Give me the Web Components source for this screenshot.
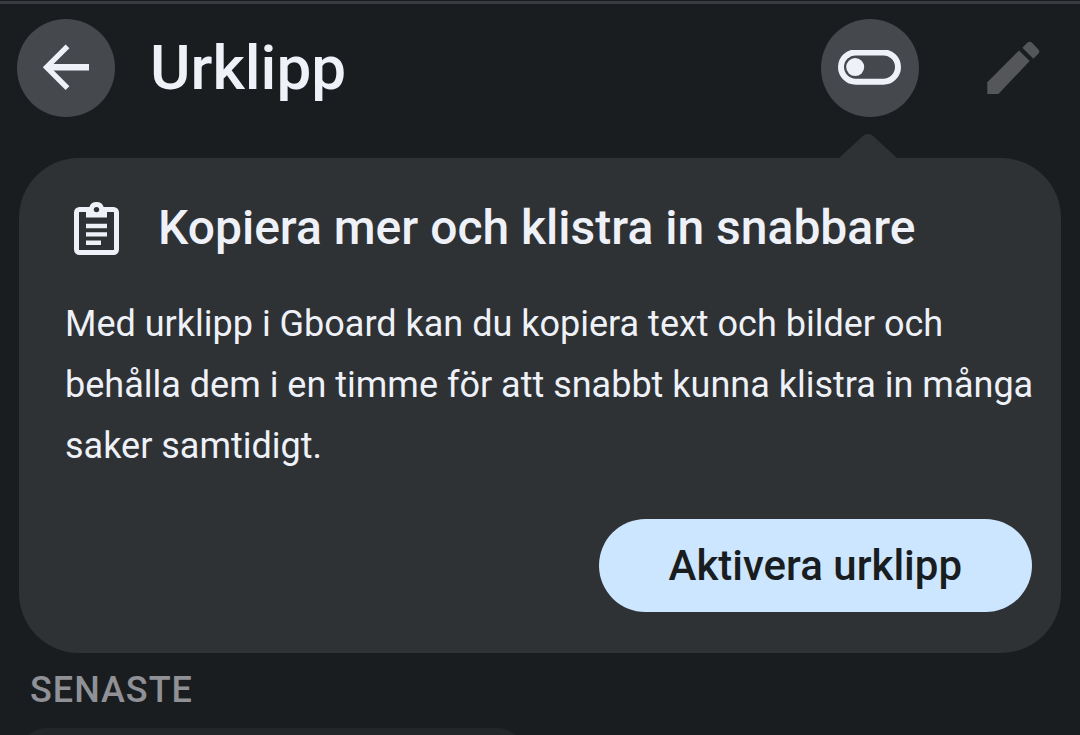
<!DOCTYPE html>
<html lang="sv">
<head>
<meta charset="utf-8">
<meta name="viewport" content="width=device-width, initial-scale=1">
<title>Urklipp</title>
<style>
  html, body { margin: 0; height: 100%; overflow: hidden; background: #191d20; }
  body { font-family: Roboto, "Liberation Sans", sans-serif; color: #eef1f8; }
</style>
</head>
<body>
<clipboard-panel></clipboard-panel>
<script>
const define = (name, html) => {
  const template = document.createElement("template");
  template.innerHTML = html;
  customElements.define(name, class extends HTMLElement {
    constructor() {
      super();
      this.attachShadow({ mode: "open" }).append(template.content.cloneNode(true));
      const button = this.shadowRoot.querySelector("button");
      if (button && this.hasAttribute("label")) button.setAttribute("aria-label", this.getAttribute("label"));
      if (button && this.hasAttribute("disabled")) button.disabled = true;
    }
  });
};

define("icon-button", `
<style>
  :host { display: block; flex: none; }
  button { display: flex; align-items: center; justify-content: center; width: 98px; height: 98px;
    padding: 0; border: 0; border-radius: 50%; background: #45484c; color: inherit; }
  button:disabled { background: none; color: #55565a; }
</style>
<button type="button"><slot></slot></button>`);

define("panel-header", `
<style>
  :host { display: flex; align-items: center; padding: 15px 18px 0 17px; border-top: 3px solid #3a3b40; margin-top: 1px; }
  h1 { flex: 1; margin: 0 0 0 35px; font-size: 62px; line-height: 72px; font-weight: 500; }
  icon-button + icon-button { margin-left: 45px; }
  svg { display: block; }
</style>
<icon-button label="Tillbaka">
  <svg width="48" height="48" viewBox="0 0 48 48" fill="none" stroke="currentColor" aria-hidden="true">
    <path d="M25.5 2.3 4.6 23.2l20.9 20.9" stroke-width="5.4"/><path d="M5 23.2h42" stroke-width="6.4"/>
  </svg>
</icon-button>
<h1>Urklipp</h1>
<icon-button label="Urklipp av eller på">
  <svg width="64" height="36" viewBox="0 0 64 36" aria-hidden="true">
    <rect x="3" y="2.4" width="57" height="29.4" rx="14.7" fill="none" stroke="currentColor" stroke-width="6"/>
    <circle cx="17.2" cy="17.1" r="9" fill="currentColor"/>
  </svg>
</icon-button>
<icon-button label="Redigera" disabled>
  <svg width="54" height="54" viewBox="0 0 54 54" fill="currentColor" aria-hidden="true">
    <path d="M1.3 41.2 33 9.5 43.7 20 12.4 53H1.3Z"/>
    <path d="M36.4 6.7 41.3 1.8Q43.7-.4 46 1.8L52.4 8.4Q54.2 10.5 52.4 12.5L47.4 17.7Z"/>
  </svg>
</icon-button>`);

define("action-button", `
<style>
  :host { display: block; }
  button { display: block; height: 93px; padding: 0 70px; border: 0; border-radius: 47px;
    background: #cce6ff; color: #191d20; font: inherit; font-size: 42px; line-height: 48px; font-weight: 500; }
</style>
<button type="button"><slot></slot></button>`);

define("promo-card", `
<style>
  :host { display: block; position: relative; margin: 41px 19px 0; padding: 38px 20px 41px 46px;
    border-radius: 60px; background: #2e3234; }
  .pointer { position: absolute; right: 164px; bottom: 100%; display: block; }
  .head { display: flex; align-items: center; gap: 39px; padding-left: 9px; }
  .head svg { flex: none; }
  h2 { margin: 0; font-size: 48px; line-height: 64px; font-weight: 500; }
  p { margin: 34px 0 42px; font-size: 36px; line-height: 61px; }
  .actions { display: flex; justify-content: flex-end; padding-right: 9px; }
</style>
<svg class="pointer" width="58" height="24" viewBox="0 0 58 24" aria-hidden="true"><path d="M0 24 24.5 1.4Q29-1.4 33.5 1.4L58 24Z" fill="#2e3234"/></svg>
<div class="head">
  <svg width="45" height="54" viewBox="0 0 45 54" aria-hidden="true">
    <rect x="2.5" y="8.5" width="40" height="43" rx="3" fill="none" stroke="currentColor" stroke-width="5"/>
    <path fill="currentColor" d="M12 6.5H15.2A7.6 7.6 0 0 1 29.8 6.5H33V16.5H12Z"/>
    <circle cx="22.5" cy="8.6" r="2.7" fill="#2e3234"/>
    <path d="M12 25h21M12 33.4h21M12 41.8h15" stroke="currentColor" stroke-width="4.4"/>
  </svg>
  <h2><slot name="title"></slot></h2>
</div>
<p><slot></slot></p>
<div class="actions"><slot name="action"></slot></div>`);

define("recent-clips", `
<style>
  :host { display: block; padding: 16px 19px 0; }
  h3 { margin: 0 0 17px 11px; font-size: 36px; line-height: 42px; font-weight: 500; letter-spacing: 1px; color: #909196; }
  .grid { display: grid; grid-template-columns: 1fr 1fr; gap: 30px; }
  .clip { height: 120px; border-radius: 28px; background: #222629; }
</style>
<h3><slot></slot></h3>
<div class="grid"><div class="clip"></div></div>`);

define("clipboard-panel", `
<style>
  :host { display: flow-root; }
</style>
<panel-header></panel-header>
<promo-card>
  <span slot="title">Kopiera mer och klistra in snabbare</span>
  Med urklipp i Gboard kan du kopiera text och bilder och behålla dem i en timme för att snabbt kunna klistra in många saker samtidigt.
  <action-button slot="action">Aktivera urklipp</action-button>
</promo-card>
<recent-clips>SENASTE</recent-clips>`);
</script>
</body>
</html>
